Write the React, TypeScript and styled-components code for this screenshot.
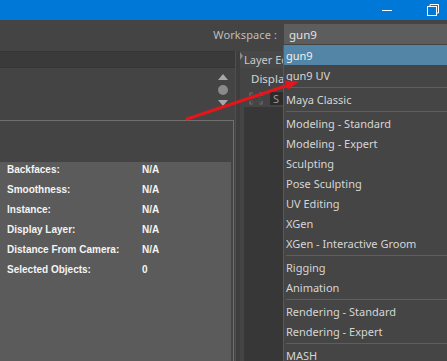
import React from 'react';
import styled, { createGlobalStyle } from 'styled-components';

const Global = createGlobalStyle`
  html, body { margin: 0; padding: 0; background: #444; overflow: hidden; }
  body { width: 447px; height: 361px; font-family: "Noto Sans", "DejaVu Sans", sans-serif; }
  * { box-sizing: border-box; }
`;

const Window = styled.div`
  position: relative;
  width: 447px;
  height: 361px;
  display: flex;
  flex-direction: column;
  background: #444;
  overflow: hidden;
`;

const TitleBar = styled.div`
  height: 20px;
  flex: none;
  background: #0078d7;
  display: flex;
  justify-content: flex-end;
  align-items: center;
  padding-right: 8px;
  gap: 34px;
`;

const CaptionIcon = styled.svg`
  display: block;
  width: 12px;
  height: 12px;
  color: #fff;
`;

const WorkspaceBar = styled.div`
  height: 31px;
  flex: none;
  display: flex;
  align-items: flex-start;
  justify-content: flex-end;
  padding-top: 4px;
  gap: 7px;
  background: #444;
`;

const WorkspaceLabel = styled.span`
  font-size: 11px;
  line-height: 22px;
  color: #bdbdbd;
  letter-spacing: 0.1px;
`;

const ComboWrap = styled.div`
  position: relative;
  width: 163px;
  height: 20px;
`;

const Combo = styled.div`
  width: 100%;
  height: 20px;
  background: #5d5d5d;
  color: #e2e2e2;
  font-size: 11.5px;
  line-height: 22px;
  padding-left: 5px;
`;

const Menu = styled.div`
  position: absolute;
  top: 21px;
  left: -1px;
  width: 165px;
  height: 320px;
  background: #454545;
  border-left: 1px solid #595959;
  z-index: 5;
  display: flex;
  flex-direction: column;
`;

const MenuItem = styled.div<{ $active?: boolean }>`
  height: 20px;
  flex: none;
  padding: 2px 0 0 2px;
  font-size: 11px;
  line-height: 18px;
  white-space: nowrap;
  color: ${(p) => (p.$active ? '#f0f0f0' : '#d6d6d6')};
  background: ${(p) => (p.$active ? '#5285a6' : 'transparent')};
`;

const MenuSep = styled.div`
  height: 4px;
  flex: none;
  margin-left: 2px;
  display: flex;
  align-items: center;
  &::after {
    content: '';
    display: block;
    width: 100%;
    height: 1px;
    background: #5e5e5e;
  }
`;

const Main = styled.div`
  flex: 1;
  display: flex;
  min-height: 0;
`;

const LeftPanel = styled.div`
  width: 235px;
  flex: none;
  display: flex;
  flex-direction: column;
`;

const TopStrip = styled.div`
  height: 17px;
  flex: none;
  background: #3a3a3a;
  border-top: 1px solid #363636;
  border-bottom: 1px solid #363636;
`;

const ToolArea = styled.div`
  height: 52px;
  flex: none;
  display: flex;
  justify-content: flex-end;
  padding: 6px 7px 0 0;
`;

const Scroller = styled.div`
  width: 10px;
  display: flex;
  flex-direction: column;
  align-items: center;
  gap: 5px;
`;

const Arrow = styled.div<{ $down?: boolean }>`
  width: 0;
  height: 0;
  border-left: 5px solid transparent;
  border-right: 5px solid transparent;
  ${(p) => (p.$down ? 'border-top: 6px solid #a8a8a8;' : 'border-bottom: 6px solid #a8a8a8;')}
`;

const Knob = styled.div`
  width: 10px;
  height: 10px;
  border-radius: 50%;
  background: #8a8a8a;
`;

const Framed = styled.div`
  flex: 1;
  display: flex;
  flex-direction: column;
  border-top: 1px solid #6f6f6f;
  border-right: 1px solid #6f6f6f;
  margin-right: 1px;
`;

const FrameHeader = styled.div`
  height: 41px;
  flex: none;
  background: #444;
`;

const InfoPanel = styled.div`
  flex: 1;
  background: #5b5b5b;
  margin-right: 2px;
  display: grid;
  grid-template-columns: 135px 1fr;
  grid-auto-rows: 16px;
  row-gap: 4px;
  align-content: start;
  padding-left: 7px;
  font-family: "Liberation Sans", Arial, sans-serif;
  font-weight: bold;
  font-size: 10px;
  line-height: 16px;
  color: #f4f4f4;
`;

const Splitter = styled.div`
  width: 5px;
  flex: none;
  background: #3e3e3e;
  border-left: 1px solid #4f4f4f;
`;

const MidColumn = styled.div`
  flex: 1;
  display: flex;
  flex-direction: column;
`;

const Tab = styled.div`
  height: 17px;
  flex: none;
  display: flex;
  align-items: center;
  gap: 1px;
  background: #484848;
  font-size: 11px;
  color: #c8c8c8;
  white-space: nowrap;
  overflow: hidden;
`;

const TabMark = styled.div`
  width: 0;
  height: 0;
  border-top: 4px solid transparent;
  border-bottom: 4px solid transparent;
  border-left: 3px solid #8a8a8a;
  align-self: flex-start;
  margin-top: 1px;
`;

const DisplayRow = styled.div`
  height: 21px;
  flex: none;
  padding-left: 11px;
  font-size: 11.5px;
  line-height: 21px;
  color: #d4d4d4;
  white-space: nowrap;
  overflow: hidden;
`;

const IconRow = styled.div`
  height: 18px;
  flex: none;
  display: flex;
  align-items: center;
  padding-left: 9px;
  gap: 7px;
`;

const SBox = styled.div`
  width: 14px;
  height: 13px;
  background: #2c2c2c;
  color: #9a9a9a;
  font-size: 11px;
  line-height: 13px;
  padding-left: 3px;
  overflow: hidden;
`;

const DarkList = styled.div`
  flex: 1;
  margin: 0 0 0 4px;
  background: #373737;
  display: flex;
  flex-direction: column;
  align-items: flex-end;
  padding-top: 10px;
`;

const ListMark = styled.div`
  height: 20px;
  flex: none;
  width: 6px;
  font-size: 12px;
  line-height: 20px;
  color: #d0d0d0;
  overflow: hidden;
  display: flex;
  align-items: center;
`;

const Bar = styled.span`
  display: block;
  width: 2px;
  height: 7px;
  background: #d8d8d8;
  margin-left: 1px;
`;

const Overlay = styled.svg`
  position: absolute;
  left: 0;
  top: 0;
  width: 447px;
  height: 361px;
  pointer-events: none;
  z-index: 10;
`;

type Entry = { label?: string; sep?: boolean };

const entries: Entry[] = [
  { label: 'gun9' },
  { label: 'gun9 UV' },
  { sep: true },
  { label: 'Maya Classic' },
  { sep: true },
  { label: 'Modeling - Standard' },
  { label: 'Modeling - Expert' },
  { label: 'Sculpting' },
  { label: 'Pose Sculpting' },
  { label: 'UV Editing' },
  { label: 'XGen' },
  { label: 'XGen - Interactive Groom' },
  { sep: true },
  { label: 'Rigging' },
  { label: 'Animation' },
  { sep: true },
  { label: 'Rendering - Standard' },
  { label: 'Rendering - Expert' },
  { sep: true },
  { label: 'MASH' },
];

const info: [string, string][] = [
  ['Backfaces:', 'N/A'],
  ['Smoothness:', 'N/A'],
  ['Instance:', 'N/A'],
  ['Display Layer:', 'N/A'],
  ['Distance From Camera:', 'N/A'],
  ['Selected Objects:', '0'],
];

export default function App() {
  return (
    <Window>
      <Global />
      <TitleBar>
        <CaptionIcon viewBox="0 0 12 12">
          <path d="M1 6.5h10" stroke="currentColor" strokeWidth="1" fill="none" />
        </CaptionIcon>
        <CaptionIcon viewBox="0 0 12 12">
          <path d="M3 2.5V0.5h8.5v8.5H9.5" stroke="currentColor" strokeWidth="1" fill="none" />
          <rect x="0.5" y="2.5" width="9" height="9" stroke="currentColor" strokeWidth="1" fill="none" />
        </CaptionIcon>
      </TitleBar>
      <WorkspaceBar>
        <WorkspaceLabel>Workspace :</WorkspaceLabel>
        <ComboWrap>
          <Combo>gun9</Combo>
          <Menu>
            {entries.map((e, i) =>
              e.sep ? (
                <MenuSep key={i} />
              ) : (
                <MenuItem key={i} $active={i === 0}>
                  {e.label}
                </MenuItem>
              )
            )}
          </Menu>
        </ComboWrap>
      </WorkspaceBar>
      <Main>
        <LeftPanel>
          <TopStrip />
          <ToolArea>
            <Scroller>
              <Arrow />
              <Knob />
              <Arrow $down />
            </Scroller>
          </ToolArea>
          <Framed>
            <FrameHeader />
            <InfoPanel>
              {info.map(([k, v]) => (
                <React.Fragment key={k}>
                  <span>{k}</span>
                  <span>{v}</span>
                </React.Fragment>
              ))}
            </InfoPanel>
          </Framed>
        </LeftPanel>
        <Splitter />
        <MidColumn>
          <Tab>
            <TabMark />
            Layer Editor
          </Tab>
          <DisplayRow>Display</DisplayRow>
          <IconRow>
            <svg width="14" height="13" viewBox="0 0 14 13">
              <path d="M1 4V1h3M10 1h3v3M13 9v3h-3M4 12H1V9" stroke="#6d6d6d" strokeWidth="1.2" fill="none" />
              <path d="M3 3h8v7H3z" stroke="#5a5a5a" strokeWidth="0.8" strokeDasharray="1 1" fill="none" />
            </svg>
            <SBox>S</SBox>
          </IconRow>
          <DarkList>
            <ListMark><Bar /></ListMark>
            <ListMark><Bar /></ListMark>
            <ListMark><Bar /></ListMark>
            <ListMark><Bar /></ListMark>
            <ListMark>(</ListMark>
            <ListMark>(</ListMark>
          </DarkList>
        </MidColumn>
      </Main>
      <Overlay viewBox="0 0 447 361">
        <line x1="187" y1="119" x2="287" y2="85.5" stroke="#e5161b" strokeWidth="3" strokeLinecap="round" />
        <path d="M299 81.5 L284 80.5 L288 89.5 Z" fill="#e5161b" />
      </Overlay>
    </Window>
  );
}
